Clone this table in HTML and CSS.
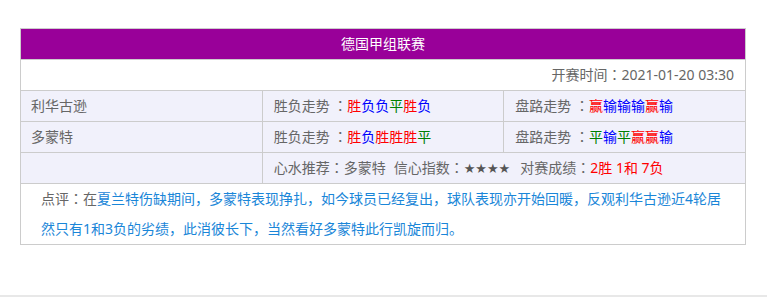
FILE: index.html
```html
<!DOCTYPE html>
<html lang="zh-CN">
<head>
<meta charset="utf-8">
<link rel="stylesheet" href="styles.css">
</head>
<body>
<div class="page">
  <table class="match">
    <tr class="title-row"><td colspan="3">德国甲组联赛</td></tr>
    <tr class="time-row"><td colspan="3">开赛时间<span class="c" lang="ja">：</span>2021-01-20 03:30</td></tr>
    <tr class="data-row">
      <td>利华古逊</td>
      <td>胜负走势 <span class="c" lang="ja">：</span><span class="r">胜</span><span class="b">负负</span><span class="g">平</span><span class="r">胜</span><span class="b">负</span></td>
      <td>盘路走势 <span class="c" lang="ja">：</span><span class="r">赢</span><span class="b">输输输</span><span class="r">赢</span><span class="b">输</span></td>
    </tr>
    <tr class="data-row">
      <td>多蒙特</td>
      <td>胜负走势 <span class="c" lang="ja">：</span><span class="r">胜</span><span class="b">负</span><span class="r">胜胜胜</span><span class="g">平</span></td>
      <td>盘路走势 <span class="c" lang="ja">：</span><span class="g">平</span><span class="b">输</span><span class="g">平</span><span class="r">赢赢</span><span class="b">输</span></td>
    </tr>
    <tr class="data-row">
      <td></td>
      <td colspan="2">心水推荐<span class="c" lang="ja">：</span>多蒙特<span class="gap1"></span>信心指数<span class="c" lang="ja">：</span><span class="stars">★★★★</span><span class="gap2"></span>对赛成绩<span class="c" lang="ja">：</span><span class="r">2胜 1和 7负</span></td>
    </tr>
    <tr class="comment-row">
      <td colspan="3"><span class="label">点评<span class="c" lang="ja">：</span>在</span><span class="blue">夏兰特伤缺期间，多蒙特表现挣扎，如今球员已经复出，球队表现亦开始回暖，反观利华古逊近4轮居然只有1和3负的劣绩，此消彼长下，当然看好多蒙特此行凯旋而归。</span></td>
    </tr>
  </table>
  <div class="foot"></div>
</div>
</body>
</html>
```
FILE: styles.css
```css
html, body {
  margin: 0;
  padding: 0;
  background: #fff;
}
body {
  font-family: "Noto Sans", "Noto Sans CJK SC", sans-serif;
  font-size: 14px;
  color: #666;
}
.page {
  padding-top: 28px;
}
.match {
  margin-left: 20px;
  width: 726px;
  border-collapse: collapse;
  table-layout: fixed;
}
.match td {
  border: 1px solid #cccccc;
  height: 31px;
  padding: 0 10px;
  line-height: 30px;
  white-space: nowrap;
  box-sizing: border-box;
}
.title-row td {
  background: #990099;
  color: #fff;
  text-align: center;
}
.time-row td {
  text-align: right;
  padding-right: 11px;
}
.data-row td {
  background: #f1f1fb;
}
.data-row td:nth-child(2),
.data-row td:nth-child(3) {
  padding-left: 11px;
}
.comment-row td {
  height: 61px;
  padding: 0 20px;
  line-height: 29.5px;
  white-space: normal;
  vertical-align: top;
}
.c {
  font-family: "Noto Sans CJK JP", sans-serif;
  line-height: 1;
}
.label { color: #666; }
.blue { color: #1a86d8; }
.r { color: #ff0000; }
.b { color: #0000ff; }
.g { color: #008000; }
.gap1 { display: inline-block; width: 8px; }
.gap2 { display: inline-block; width: 10px; }
.stars {
  font-family: "DejaVu Sans", sans-serif;
  font-size: 13px;
  line-height: 1;
  color: #555;
}
.foot {
  margin-top: 50px;
  border-bottom: 2px solid #e8e8e8;
}
```
